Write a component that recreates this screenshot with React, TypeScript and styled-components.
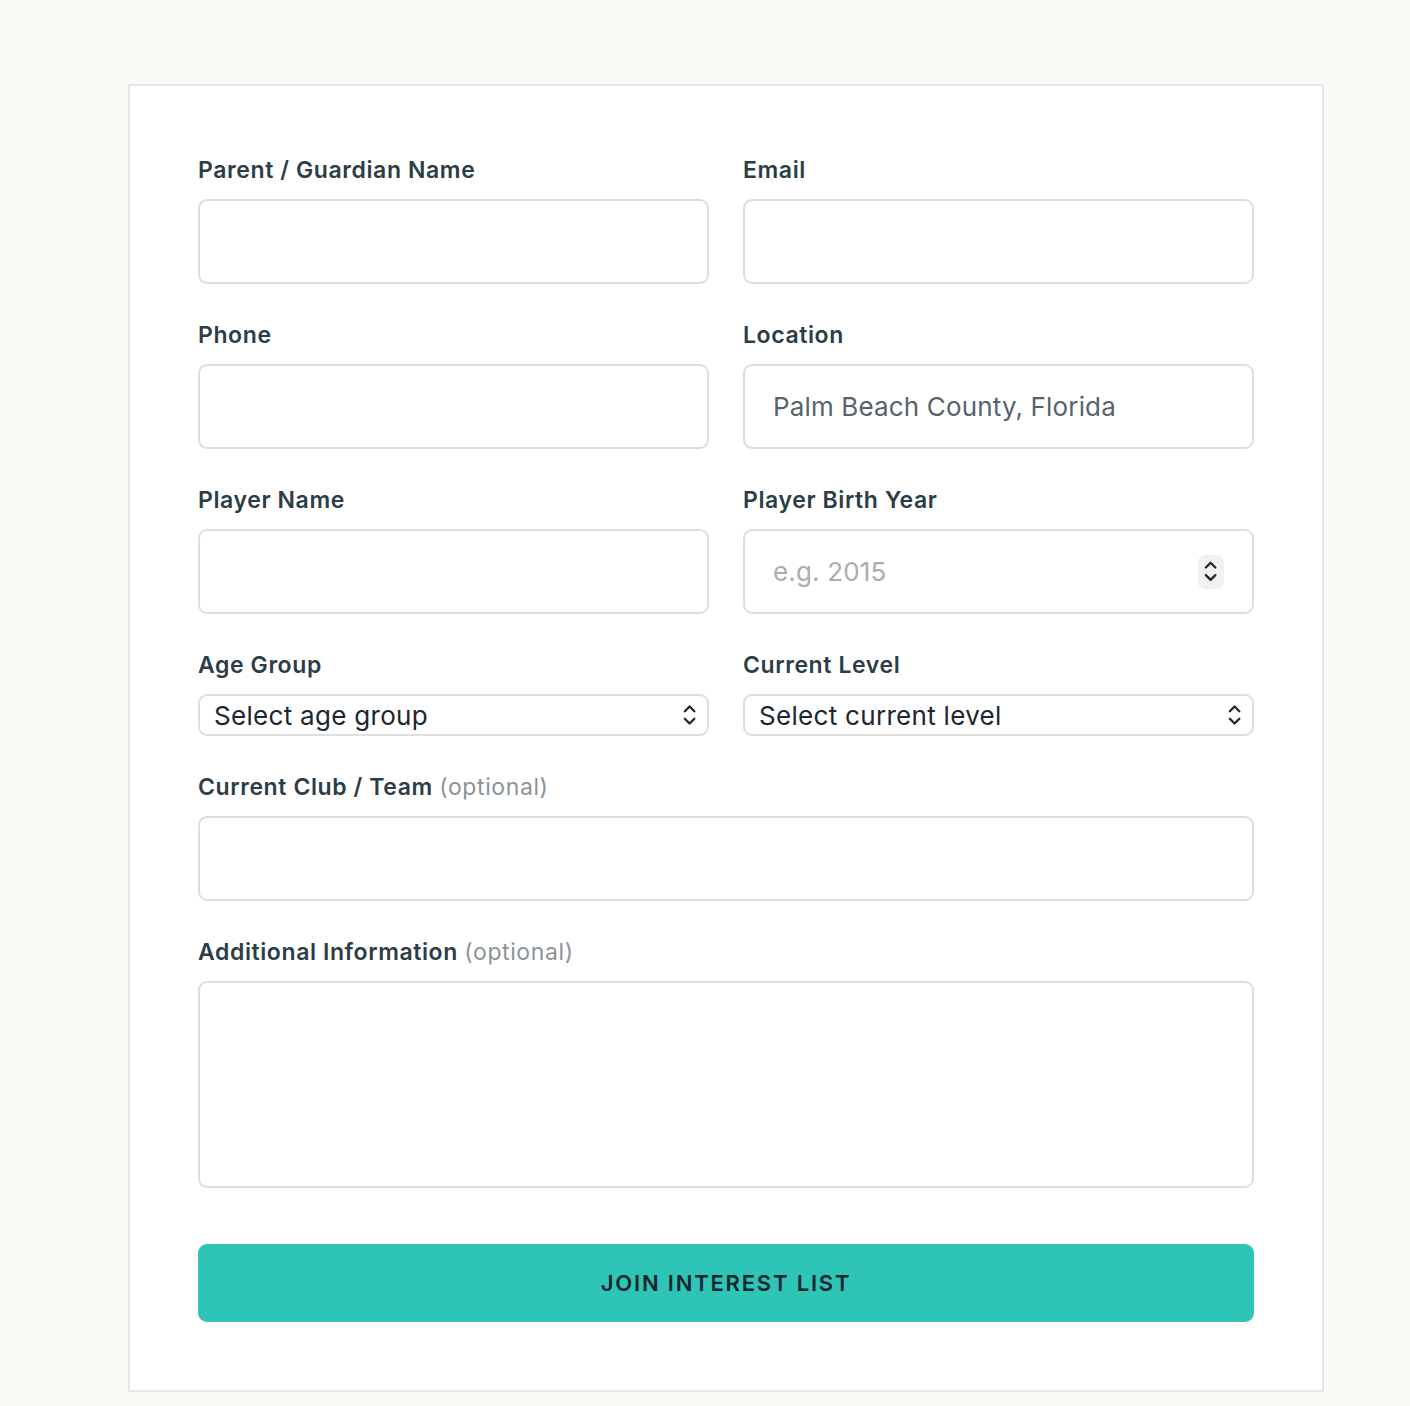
import React from "react";
import styled, { createGlobalStyle } from "styled-components";

const GlobalStyle = createGlobalStyle`
  body {
    margin: 0;
    background: #fafaf7;
    font-family: Inter, "Noto Sans", sans-serif;
  }
`;

const Page = styled.div`
  padding: 84px 0 15px 128px;
`;

const Card = styled.form`
  width: 1196px;
  box-sizing: border-box;
  background: #ffffff;
  border: 2px solid #e8e8e8;
  padding: 68px;
`;

const Grid = styled.div`
  display: grid;
  grid-template-columns: 1fr 1fr;
  column-gap: 34px;
  row-gap: 35px;
`;

const Field = styled.div<{ $wide?: boolean }>`
  display: flex;
  flex-direction: column;
  gap: 12px;
  grid-column: ${(p) => (p.$wide ? "1 / -1" : "auto")};
`;

const Label = styled.label`
  font-size: 23px;
  line-height: 33px;
  font-weight: 600;
  letter-spacing: 0.6px;
  color: #2c3d47;
`;

const Optional = styled.span`
  font-weight: 400;
  color: #8b9398;
`;

const TextInput = styled.input`
  box-sizing: border-box;
  width: 100%;
  height: 85px;
  border: 2px solid #dedede;
  border-radius: 9px;
  padding: 0 28px;
  font-family: inherit;
  font-size: 26px;
  letter-spacing: 0.15px;
  color: #56636c;
  background: #fff;
  outline: none;
  &::placeholder {
    color: #a8adb2;
  }
  &::-webkit-inner-spin-button,
  &::-webkit-outer-spin-button {
    -webkit-appearance: none;
    margin: 0;
  }
`;

const InputWrap = styled.div`
  position: relative;
`;

const Spinner = styled.div`
  position: absolute;
  right: 30px;
  top: 50%;
  transform: translateY(-50%);
  width: 26px;
  height: 34px;
  border-radius: 7px;
  background: #f1f2f0;
  display: flex;
  align-items: center;
  justify-content: center;
`;

const Select = styled.select`
  box-sizing: border-box;
  width: 100%;
  height: 42px;
  appearance: none;
  border: 2px solid #dedede;
  border-radius: 9px;
  padding: 0 40px 0 14px;
  font-family: inherit;
  font-size: 26px;
  letter-spacing: 0.3px;
  color: #1b2731;
  background: #fff;
  outline: none;
`;

const SelectIcon = styled.span`
  position: absolute;
  right: 12px;
  top: 50%;
  transform: translateY(-50%);
  display: flex;
  pointer-events: none;
`;

const TextArea = styled.textarea`
  box-sizing: border-box;
  width: 100%;
  height: 207px;
  border: 2px solid #dedede;
  border-radius: 9px;
  padding: 20px 28px;
  font-family: inherit;
  font-size: 26px;
  resize: none;
  outline: none;
  display: block;
`;

const Submit = styled.button`
  margin-top: 56px;
  width: 100%;
  height: 78px;
  border: none;
  border-radius: 9px;
  background: #2ec4b6;
  color: #15262e;
  font-family: inherit;
  font-size: 22px;
  font-weight: 600;
  letter-spacing: 1.8px;
  cursor: pointer;
`;

const UpDown = ({ size = 18 }: { size?: number }) => (
  <svg width={size * 0.8} height={size * 1.3} viewBox="0 0 16 26" fill="none">
    <path d="M3 9 L8 4 L13 9" stroke="#1b2731" strokeWidth="2.4" strokeLinecap="round" strokeLinejoin="round" />
    <path d="M3 17 L8 22 L13 17" stroke="#1b2731" strokeWidth="2.4" strokeLinecap="round" strokeLinejoin="round" />
  </svg>
);

type SelectProps = { id: string; placeholder: string; options: string[] };

const SelectField = ({ id, placeholder, options }: SelectProps) => (
  <InputWrap>
    <Select id={id} defaultValue="">
      <option value="" disabled>
        {placeholder}
      </option>
      {options.map((o) => (
        <option key={o}>{o}</option>
      ))}
    </Select>
    <SelectIcon>
      <UpDown size={19} />
    </SelectIcon>
  </InputWrap>
);

export default function App() {
  return (
    <>
      <GlobalStyle />
      <Page>
        <Card onSubmit={(e) => e.preventDefault()}>
          <Grid>
            <Field>
              <Label htmlFor="parent">Parent / Guardian Name</Label>
              <TextInput id="parent" type="text" />
            </Field>
            <Field>
              <Label htmlFor="email">Email</Label>
              <TextInput id="email" type="email" />
            </Field>
            <Field>
              <Label htmlFor="phone">Phone</Label>
              <TextInput id="phone" type="tel" />
            </Field>
            <Field>
              <Label htmlFor="location">Location</Label>
              <TextInput id="location" type="text" defaultValue="Palm Beach County, Florida" />
            </Field>
            <Field>
              <Label htmlFor="player">Player Name</Label>
              <TextInput id="player" type="text" />
            </Field>
            <Field>
              <Label htmlFor="birth">Player Birth Year</Label>
              <InputWrap>
                <TextInput id="birth" type="number" placeholder="e.g. 2015" />
                <Spinner>
                  <UpDown size={19} />
                </Spinner>
              </InputWrap>
            </Field>
            <Field>
              <Label htmlFor="age">Age Group</Label>
              <SelectField
                id="age"
                placeholder="Select age group"
                options={["U8", "U10", "U12", "U14", "U16", "U18"]}
              />
            </Field>
            <Field>
              <Label htmlFor="level">Current Level</Label>
              <SelectField
                id="level"
                placeholder="Select current level"
                options={["Recreational", "Travel", "Academy", "Elite"]}
              />
            </Field>
            <Field $wide>
              <Label htmlFor="club">
                Current Club / Team <Optional>(optional)</Optional>
              </Label>
              <TextInput id="club" type="text" />
            </Field>
            <Field $wide>
              <Label htmlFor="info">
                Additional Information <Optional>(optional)</Optional>
              </Label>
              <TextArea id="info" />
            </Field>
          </Grid>
          <Submit type="submit">JOIN INTEREST LIST</Submit>
        </Card>
      </Page>
    </>
  );
}
